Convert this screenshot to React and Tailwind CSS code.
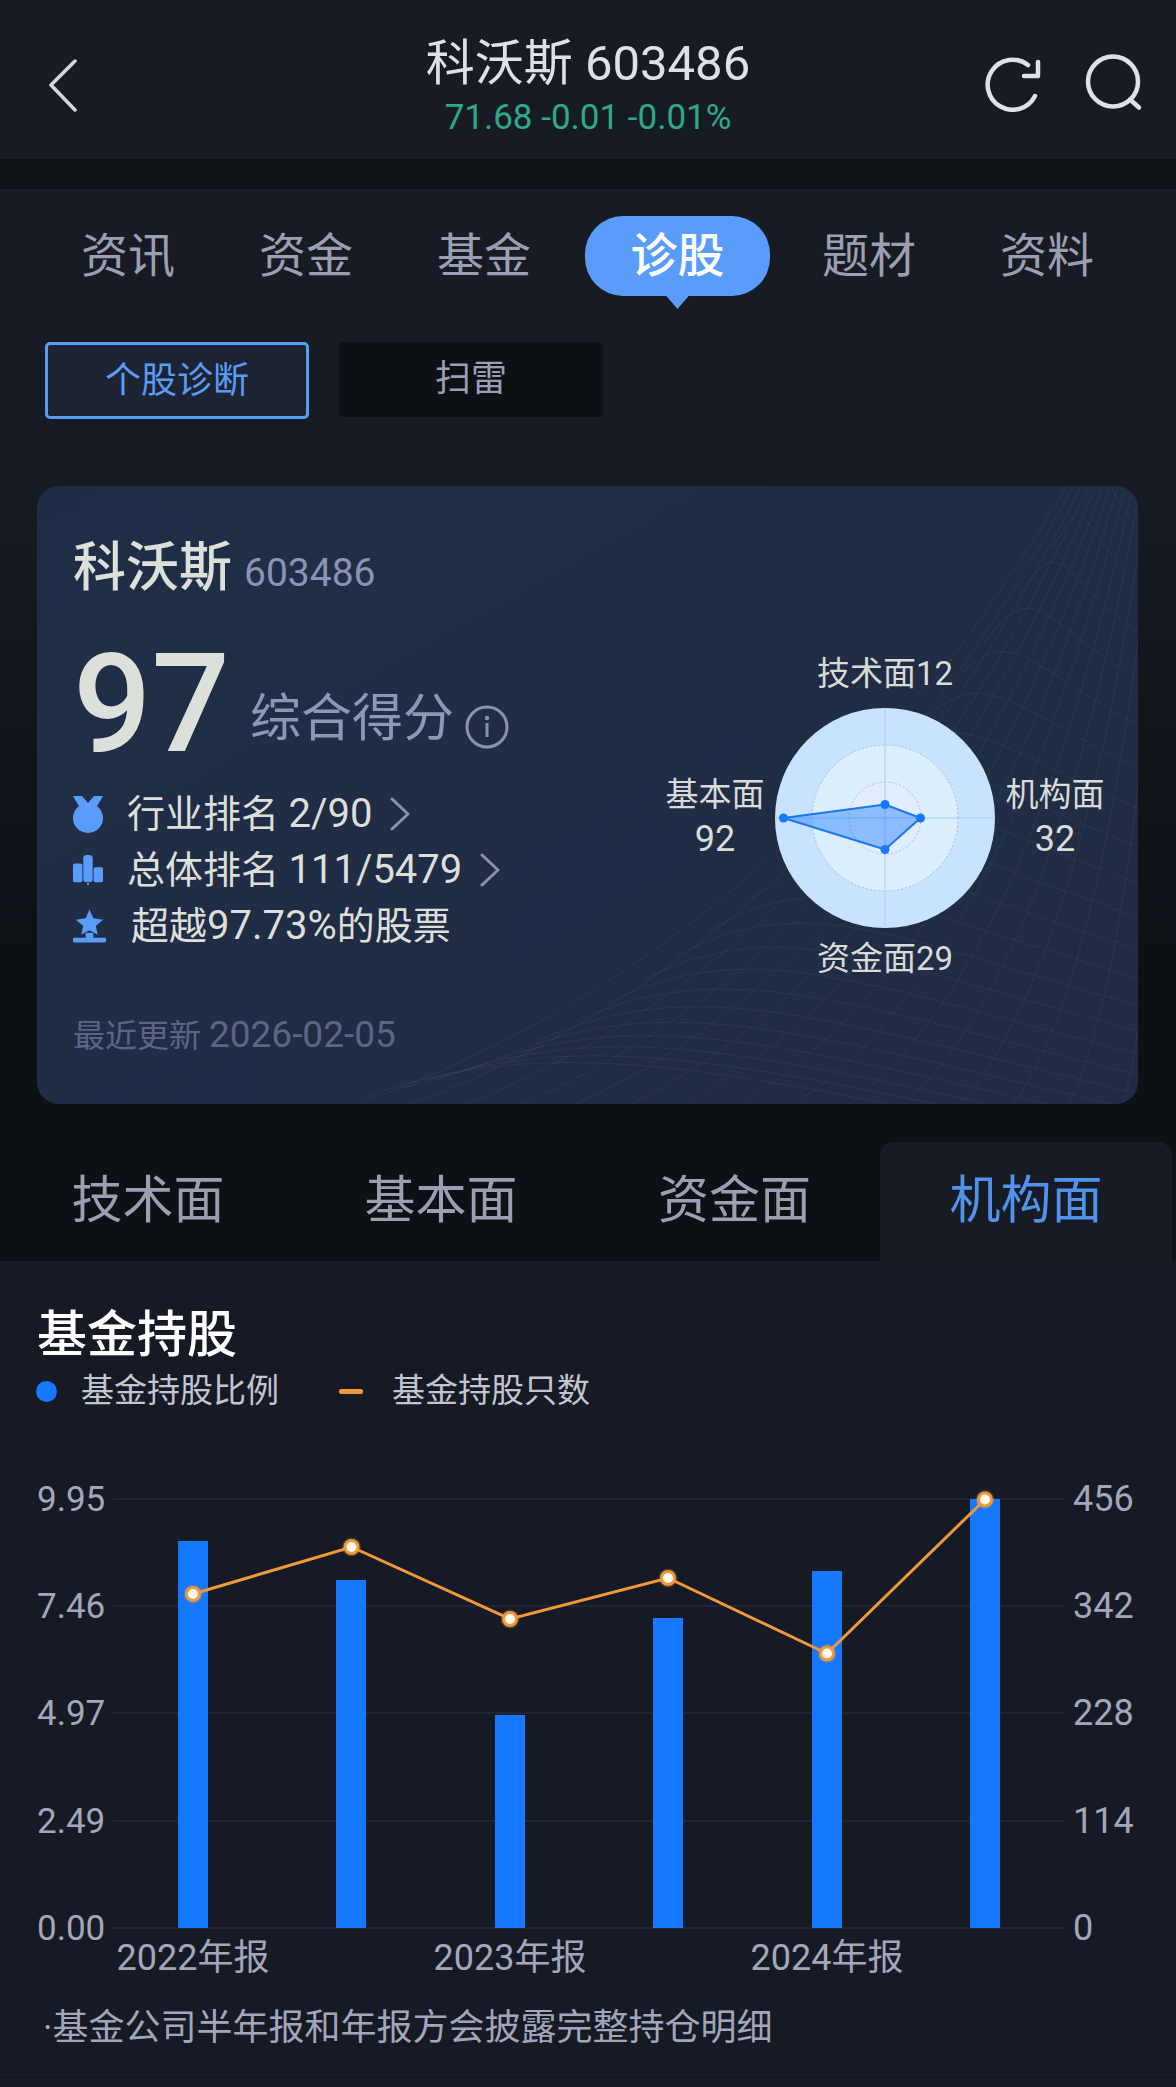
import React from "react";

const FONT = "font-['Roboto','Noto_Sans_CJK_SC',sans-serif]";

const bars = [
    { x: 178, top: 1541 },
    { x: 336, top: 1580 },
    { x: 495, top: 1715 },
    { x: 653, top: 1618 },
    { x: 812, top: 1571 },
    { x: 970, top: 1499 },
];
const points = [
    [193, 1594],
    [351.5, 1547],
    [510, 1619],
    [668, 1578],
    [827, 1653.5],
    [985, 1499.5],
];
const grid = [
    { y: 1499, left: "9.95", right: "456" },
    { y: 1606, left: "7.46", right: "342" },
    { y: 1713, left: "4.97", right: "228" },
    { y: 1821, left: "2.49", right: "114" },
    { y: 1928, left: "0.00", right: "0" },
];

export default function App() {
    return (
        <div className={`w-full h-[2087px] overflow-hidden bg-[#161a24] ${FONT}`}>
            <Header />
            <div className="h-[30px] bg-[#0e1116]" />
            <div className="h-[914px] bg-gradient-to-b from-[#171b24] from-[28%] to-[#0d1015] to-[85%]">
                <TopTabs />
                <div className="mt-[46px] flex items-start gap-[30px] pl-[45px]">
                    <div className="flex h-[77px] w-[264px] items-center justify-center rounded-[5px] border-[3px] border-[#5a9cf5] bg-[#1c2333] text-[36px] text-[#5a9cf5]">
                        个股诊断
                    </div>
                    <div className="flex h-[75px] w-[264px] items-center justify-center rounded-[5px] bg-[#0d1014] pb-[2px] text-[36px] text-[#9c9fb2]">
                        扫雷
                    </div>
                </div>
                <ScoreCard />
            </div>
            <SubTabs />
            <FundPanel />
        </div>
    );
}

function Header() {
    return (
        <div className="grid h-[159px] grid-cols-[1fr_auto_1fr] items-center bg-[#171b24]">
            <div className="pl-[48px] pt-[10px]">
                <svg width="32" height="54" viewBox="0 0 32 54" fill="none" stroke="#d5d7de" strokeWidth="3.5" strokeLinecap="round" strokeLinejoin="round">
                    <path d="M27 3 L3 27 L27 52" />
                </svg>
            </div>
            <div className="flex flex-col items-center pt-[12px]">
                <div className="text-[49px] leading-[56px] text-[#dfe1e8]">科沃斯 603486</div>
                <div className="mt-[8px] text-[35px] leading-[36px] text-[#2ea98a]">71.68 -0.01 -0.01%</div>
            </div>
            <div className="flex items-center justify-end pr-[29px]">
                <svg width="64" height="64" viewBox="0 0 64 64" fill="none" stroke="#dfe1e8" strokeWidth="4.5" strokeLinecap="round" strokeLinejoin="round" className="mr-[37px]">
                    <path d="M51 48 A25 25 0 1 1 44 17" />
                    <path d="M54 14 L54 28 L40 28" />
                </svg>
                <svg width="62" height="62" viewBox="0 0 62 62" fill="none" stroke="#dfe1e8" strokeWidth="4.5" strokeLinecap="round">
                    <circle cx="28" cy="32.5" r="25" />
                    <path d="M45 50.5 L54 58.5" />
                </svg>
            </div>
        </div>
    );
}

function TopTabs() {
    const tab = "w-[178px] text-center text-[47px] leading-[80px] text-[#9c9fb2]";
    return (
        <div className="flex pl-[39px] pt-[27px]">
            <div className={tab}>资讯</div>
            <div className={tab}>资金</div>
            <div className={tab}>基金</div>
            <div className="relative ml-[12px] mr-[10px] h-[80px] w-[185px] rounded-[38px] bg-[#5a9cf9] text-center text-[47px] font-medium leading-[80px] text-white">
                诊股
                <span className="absolute left-1/2 top-[79px] h-[14px] w-[24px] -translate-x-1/2 bg-[#5a9cf9] [clip-path:polygon(0_0,100%_0,50%_100%)]" />
            </div>
            <div className={tab}>题材</div>
            <div className={tab}>资料</div>
        </div>
    );
}

function ScoreCard() {
    return (
        <div className="relative mx-[37px] mt-[67px] flex h-[618px] w-[1101px] justify-between overflow-hidden rounded-[22px] bg-gradient-to-br from-[#1f2e46] to-[#212b44]">
            <Mesh />
            <div className="relative pl-[36px] pt-[57px]">
                <div className="flex items-baseline">
                    <span className="text-[53px] font-medium leading-[50px] text-[#dcdfda]">科沃斯</span>
                    <span className="ml-[12px] text-[39px] leading-[50px] text-[#8a93b5]">603486</span>
                </div>
                <div className="mt-[56px] flex h-[100px] items-end">
                    <span className="text-[138px] font-medium leading-[100px] text-[#dcdfda]">97</span>
                    <span className="mb-[5px] ml-[20px] text-[51px] leading-[60px] text-[#8f97b8]">综合得分</span>
                    <svg width="44" height="44" viewBox="0 0 44 44" fill="none" className="mb-[5px] ml-[11px]">
                        <circle cx="22" cy="22" r="20" stroke="#8b91a6" strokeWidth="3" />
                        <circle cx="22" cy="13" r="2.2" fill="#8b91a6" />
                        <rect x="20.5" y="18" width="3" height="14" fill="#8b91a6" />
                    </svg>
                </div>
                <div className="mt-[32px] flex flex-col text-[38px] text-[#dcdfda]">
                    <div className="flex h-[56px] items-center">
                        <MedalIcon />
                        <span className="ml-[24px]">行业排名 <span className="text-[40px]">2/90</span></span>
                        <Chevron />
                    </div>
                    <div className="flex h-[56px] items-center">
                        <BarsIcon />
                        <span className="ml-[24px]">总体排名 <span className="text-[40px]">111/5479</span></span>
                        <Chevron />
                    </div>
                    <div className="flex h-[56px] items-center">
                        <StarIcon />
                        <span className="ml-[25px]">超越<span className="text-[40px]">97.73%</span>的股票</span>
                    </div>
                </div>
                <div className="mt-[61px] text-[32px] leading-[40px] text-[#5b6684]">
                    最近更新 <span className="text-[37px]">2026-02-05</span>
                </div>
            </div>
            <Radar />
        </div>
    );
}

function Radar() {
    const label = "text-center text-[33px] text-[#d8dbd8]";
    return (
        <div className="relative pr-[23px] pt-[168px]">
            <div className="grid grid-cols-[120px_220px_120px] grid-rows-[54px_220px_56px]">
                <div className={`col-start-2 whitespace-nowrap leading-[40px] ${label}`}>技术面12</div>
                <div className={`row-start-2 self-center pb-[3px] leading-[45px] ${label}`}>
                    基本面
                    <br />
                    <span className="text-[36px]">92</span>
                </div>
                <svg width="220" height="220" viewBox="-110 -110 220 220" className="row-start-2">
                    <circle r="110" fill="#c8e3ff" />
                    <circle r="73" fill="#dbefff" stroke="#9fb3c9" strokeWidth="0.8" strokeDasharray="2 2" />
                    <circle r="36" fill="#e2edfd" stroke="#9fb3c9" strokeWidth="0.8" strokeDasharray="2 2" />
                    <path d="M0 -110V110M-110 0H110" stroke="#a3cdf3" strokeWidth="1" />
                    <path d="M0 -13.5 L35.5 0 L0 31.5 L-101.5 0 Z" fill="#1677ff" fillOpacity="0.42" stroke="#1c78f0" strokeWidth="2" strokeLinejoin="round" />
                    <circle cx="0" cy="-13.5" r="4.5" fill="#1677ff" />
                    <circle cx="35.5" cy="0" r="4.5" fill="#1677ff" />
                    <circle cx="0" cy="31.5" r="4.5" fill="#1677ff" />
                    <circle cx="-101.5" cy="0" r="4.5" fill="#1677ff" />
                </svg>
                <div className={`row-start-2 self-center pb-[3px] leading-[45px] ${label}`}>
                    机构面
                    <br />
                    <span className="text-[36px]">32</span>
                </div>
                <div className={`col-start-2 row-start-3 whitespace-nowrap pt-[11px] leading-[40px] ${label}`}>资金面29</div>
            </div>
        </div>
    );
}

// faint warped net behind the right part of the card
function Mesh() {
    const fan = [];
    for (let i = 0; i < 18; i++) {
        fan.push(`M${1035 + i * 7} -10 Q${760 + i * 26} ${470 + i * 2} ${300 + i * 56} 625`);
    }
    const cross = [];
    for (let j = 0; j < 22; j++) {
        const t = j / 21;
        const sx = 330 + t * 720;
        const sy = 610 - 610 * t * t * 0.98 - 120 * t * (1 - t);
        cross.push(`M${sx} ${sy} C${sx + 170 * (1 - t) + 30} ${sy - 70} ${sx + 380 * (1 - t)} ${sy - 20} 1110 ${sy + 60 - 20 * t}`);
    }
    return (
        <svg className="absolute inset-0" width="1101" height="618" viewBox="0 0 1101 618" fill="none" stroke="#ffffff" strokeOpacity="0.05" strokeWidth="1">
            {fan.map((d, i) => (
                <path key={i} d={d} />
            ))}
            {cross.map((d, i) => (
                <path key={i} d={d} />
            ))}
        </svg>
    );
}

function SubTabs() {
    const tab = "flex items-center justify-center pl-[3px] pt-[39px] text-[51px] text-[#9c9fb2]";
    return (
        <div className="grid h-[158px] grid-cols-[293px_293px_294px_292px_4px] bg-[#0d1015]">
            <div className={tab}>技术面</div>
            <div className={tab}>基本面</div>
            <div className={tab}>资金面</div>
            <div className="mt-[39px] flex items-center justify-center rounded-t-[14px] bg-[#171b24] text-[51px] text-[#4f93ec]">机构面</div>
        </div>
    );
}

function FundPanel() {
    return (
        <div className="bg-[#161a24]">
            <div className="pl-[37px] pt-[49px] text-[50px] font-medium leading-[50px] text-white">基金持股</div>
            <div className="mt-[11px] flex h-[40px] items-center pl-[36px] text-[33px] text-[#c3c6d2]">
                <span className="h-[21px] w-[21px] rounded-full bg-[#1677ff]" />
                <span className="ml-[24px]">基金持股比例</span>
                <span className="ml-[60px] h-[5px] w-[24px] rounded-[2px] bg-[#f0993a]" />
                <span className="ml-[29px]">基金持股只数</span>
            </div>
            <FundChart />
            <div className="mt-[3px] pl-[43px] text-[36px] leading-[50px] text-[#a2a6bb]">·基金公司半年报和年报方会披露完整持仓明细</div>
            <div className="mt-[24px] h-[9px] border-t border-[#10131a]" />
        </div>
    );
}

function FundChart() {
    return (
        <svg width="1176" height="540" viewBox="0 1460 1176 540" className="mt-[49px] block" fontSize="35" fill="#a3a7bc">
            {grid.map((g) => (
                <g key={g.y}>
                    <line x1="113" x2="1065" y1={g.y} y2={g.y} stroke="#252a38" strokeWidth="1.5" />
                    <text x="37" y={g.y + 12}>{g.left}</text>
                    <text x="1073" y={g.y + 12} fontSize="36">{g.right}</text>
                </g>
            ))}
            {bars.map((b) => (
                <rect key={b.x} x={b.x} y={b.top} width="30" height={1928 - b.top} fill="#1677ff" />
            ))}
            <polyline points={points.map((p) => p.join(",")).join(" ")} fill="none" stroke="#f0993a" strokeWidth="3" />
            {points.map((p) => (
                <g key={p[0]}>
                    <circle cx={p[0]} cy={p[1]} r="9.5" fill="#f0993a" fillOpacity="0.25" />
                    <circle cx={p[0]} cy={p[1]} r="6.5" fill="#fff8ee" stroke="#f0993a" strokeWidth="3" />
                </g>
            ))}
            <text x="193" y="1970" textAnchor="middle" fontSize="36">2022年报</text>
            <text x="510" y="1970" textAnchor="middle" fontSize="36">2023年报</text>
            <text x="827" y="1970" textAnchor="middle" fontSize="36">2024年报</text>
        </svg>
    );
}

function Chevron() {
    return (
        <svg width="20" height="34" viewBox="0 0 20 34" fill="none" stroke="#8b91a6" strokeWidth="3" strokeLinecap="round" strokeLinejoin="round" className="ml-[18px]">
            <path d="M2 2 L18 17 L2 32" />
        </svg>
    );
}

function MedalIcon() {
    return (
        <svg width="30" height="37" viewBox="0 0 30 37" fill="#5a9cf9">
            <path d="M0 0 H9 L15 7 L11 10 L7 12 Z" />
            <path d="M30 0 H21 L15 7 L19 10 L23 12 Z" />
            <circle cx="15" cy="22" r="15" />
        </svg>
    );
}

function BarsIcon() {
    return (
        <svg width="30" height="33" viewBox="0 0 32 33" fill="#5a9cf9">
            <rect x="0" y="9" width="10" height="20" rx="2" />
            <rect x="11" y="0" width="10" height="29" rx="3.5" />
            <rect x="22" y="13" width="10" height="16" rx="2" />
            <rect x="15" y="30" width="2" height="2" />
        </svg>
    );
}

function StarIcon() {
    return (
        <svg width="33" height="34" viewBox="0 0 34 34" fill="#5a9cf9">
            <path d="M17 0 L21 9 L31 10.5 L23.5 17 L25.5 26 L17 21.5 L8.5 26 L10.5 17 L3 10.5 L13 9 Z" />
            <rect x="13" y="24" width="8" height="6" />
            <rect x="0" y="29" width="34" height="5" rx="1.5" />
        </svg>
    );
}
